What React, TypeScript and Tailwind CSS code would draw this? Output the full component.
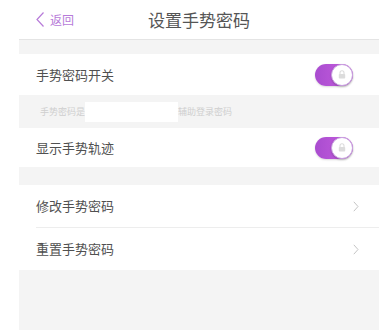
import React from 'react';

const Toggle: React.FC = () => (
  <div className="relative w-[38px] h-[22px] rounded-full bg-gradient-to-r from-[#a94ccf] to-[#c75fe0] shadow-[0_1px_2px_rgba(0,0,0,0.15)]">
    <div className="absolute right-0 top-0 w-[22px] h-[22px] rounded-full bg-white border border-[#c9a2e0] flex items-center justify-center shadow-[0_1px_2px_rgba(0,0,0,0.2)]">
      <svg width="8" height="9" viewBox="0 0 8 9">
        <path d="M2 4V2.8a2 2 0 0 1 4 0V4" fill="none" stroke="#dcdcdc" strokeWidth="1.1" />
        <rect x="0.8" y="4" width="6.4" height="4.6" rx="0.8" fill="#dcdcdc" />
      </svg>
    </div>
  </div>
);

const Chevron: React.FC = () => (
  <svg width="6" height="11" viewBox="0 0 6 11">
    <path d="M0.8 0.8L5 5.5L0.8 10.2" fill="none" stroke="#c4c4c4" strokeWidth="1" />
  </svg>
);

export default function App() {
  return (
    <div
      className="w-full h-[330px] bg-white pl-[19px] pr-[8px] overflow-hidden"
      style={{ fontFamily: '"Noto Sans CJK SC", "Noto Sans", sans-serif' }}
    >
      <div className="h-full flex flex-col bg-[#f4f4f4]">
        {/* header */}
        <div className="h-[40px] shrink-0 bg-white border-b border-[#e4e4e4] grid grid-cols-[1fr_auto_1fr] items-center">
          <div className="flex items-center pl-[16px]">
            <svg width="10" height="17" viewBox="0 0 10 17">
              <path d="M8.5 1.5L2 8.5L8.5 15.5" fill="none" stroke="#b77bd9" strokeWidth="1.2" />
            </svg>
            <span className="ml-[5px] text-[12px] leading-none text-[#b77bd9]">返回</span>
          </div>
          <div className="text-[17px] text-[#555] leading-none">设置手势密码</div>
          <div />
        </div>

        <div className="h-[14px] shrink-0" />

        {/* row 1 */}
        <div className="h-[41px] shrink-0 bg-white flex items-center justify-between pl-[17px] pr-[26px]">
          <span className="text-[13px] text-[#505050]">手势密码开关</span>
          <Toggle />
        </div>

        {/* hint */}
        <div className="h-[33px] shrink-0 flex items-center pl-[21px] text-[9px] text-[#cfcfcf]">
          <span>手势密码是</span>
          <span className="inline-block w-[93px] h-[20px] bg-white" />
          <span>辅助登录密码</span>
        </div>

        {/* row 2 */}
        <div className="h-[39px] shrink-0 bg-white flex items-center justify-between pl-[17px] pr-[26px]">
          <span className="text-[13px] text-[#505050]">显示手势轨迹</span>
          <Toggle />
        </div>

        <div className="h-[18px] shrink-0" />

        {/* list */}
        <div className="shrink-0 bg-white pl-[17px]">
          <div className="h-[43px] flex items-center justify-between pr-[20px] border-b border-[#ededed]">
            <span className="text-[13px] text-[#505050]">修改手势密码</span>
            <Chevron />
          </div>
          <div className="h-[42px] flex items-center justify-between pr-[20px]">
            <span className="text-[13px] text-[#505050]">重置手势密码</span>
            <Chevron />
          </div>
        </div>

        <div className="flex-1" />
      </div>
    </div>
  );
}
